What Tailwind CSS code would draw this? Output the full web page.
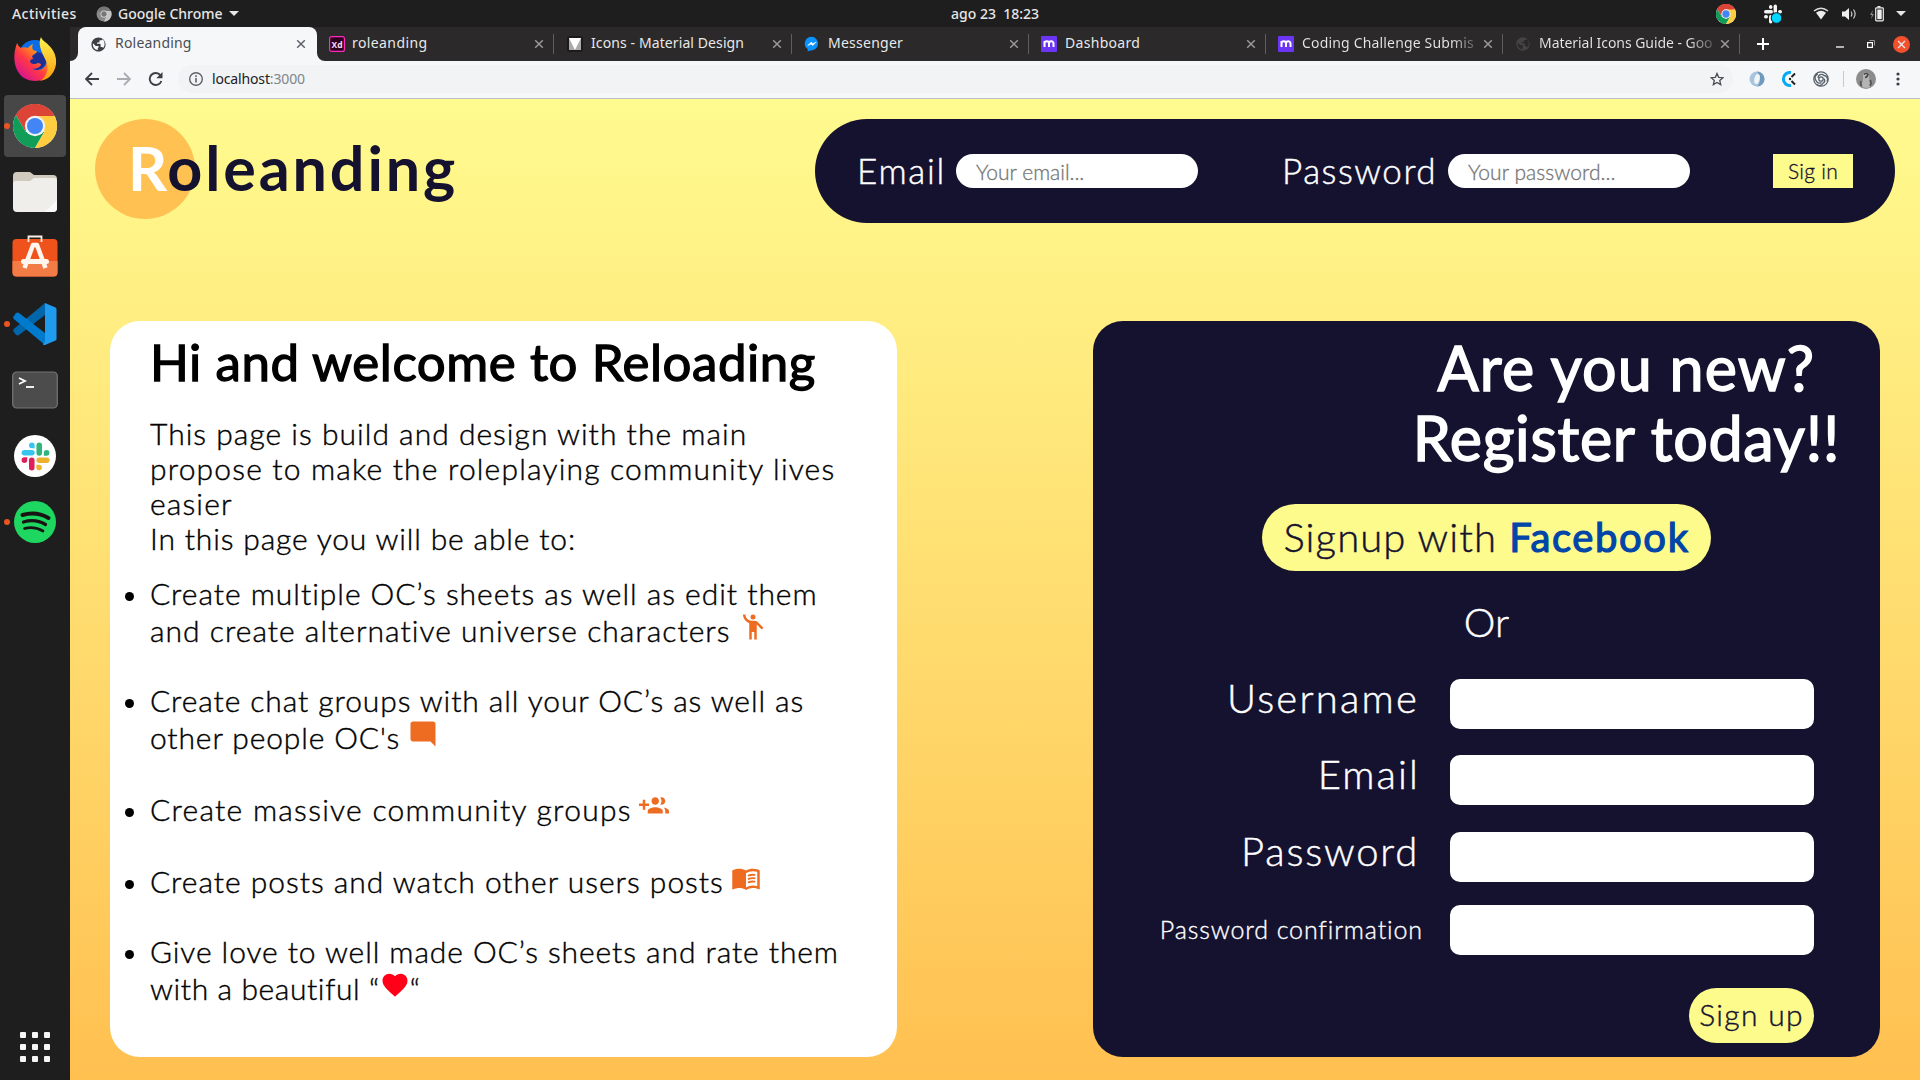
<!DOCTYPE html>
<html lang="en">
<head>
<meta charset="utf-8">
<title>Roleanding</title>
<script src="https://cdn.jsdelivr.net/npm/@tailwindcss/browser@4"></script>
</head>
<body class="w-[1920px] h-[1080px] overflow-hidden bg-[#1e1e1e] font-['Noto_Sans',sans-serif]">
<svg class="hidden">
  <defs>
    <symbol id="x" viewBox="0 0 10 10"><path d="M1.2 1.2l7.6 7.6M8.8 1.2L1.2 8.8" stroke="currentColor" stroke-width="1.5" fill="none"/></symbol>
    <symbol id="globe" viewBox="0 0 24 24"><path fill="currentColor" d="M12 2C6.48 2 2 6.48 2 12s4.48 10 10 10 10-4.480 10-10S17.520 2 12 2zm-1 17.900c-3.950-.49-7-3.850-7-7.900 0-.62.080-1.210.21-1.790L8 14h4v2l-1 1.500v2.400zm7.500-3c-.26-.81-1-1.400-1.900-1.400H15v-3c0-1-.6-1.500-1.500-1.500H10V9h2c.9 0 1.500-.6 1.500-1.300V6h2c1 0 1.700-.7 1.900-1.500C20 6 21 9 20.500 12.500c0 1.700-1 3.400-2 4.400z"/></symbol>
    <symbol id="chrome" viewBox="0 0 48 48">
      <circle cx="24" cy="24" r="22" fill="#fff"/>
      <path fill="#db4437" d="M24 24L4.950 13A22 22 0 0 1 43.050 13z"/>
      <path fill="#db4437" d="M24 2A22 22 0 0 0 4.950 13L14.500 29.500 24 14h19.600A22 22 0 0 0 24 2z"/>
      <path fill="#0f9d58" d="M4.950 13A22 22 0 0 0 24 46l9.500-16.500L24 34 14.500 29.500z"/>
      <path fill="#ffcd40" d="M43.600 14H24l9.500 15.500L24 46A22 22 0 0 0 43.600 14z"/>
      <circle cx="24" cy="24" r="10.200" fill="#f1f1f1"/><circle cx="24" cy="24" r="8" fill="#4285f4"/>
    </symbol>
    <symbol id="slack" viewBox="0 0 24 24">
      <g fill="#36c5f0"><path d="M9 0.500a2.300 2.300 0 1 0 0 4.600h2.300V2.800A2.300 2.300 0 0 0 9 0.500z"/><rect x="0.500" y="6.600" width="10.800" height="4.600" rx="2.300"/></g>
      <g fill="#2eb67d"><path d="M23.500 9a2.300 2.300 0 1 0-4.600 0v2.300h2.300A2.300 2.300 0 0 0 23.500 9z"/><rect x="12.800" y="0.500" width="4.600" height="10.800" rx="2.300"/></g>
      <g fill="#ecb22e"><path d="M15 23.500a2.300 2.300 0 1 0 0-4.600h-2.300v2.300a2.300 2.300 0 0 0 2.300 2.300z"/><rect x="12.800" y="12.800" width="10.800" height="4.600" rx="2.300"/></g>
      <g fill="#e01e5a"><path d="M0.500 15a2.300 2.300 0 1 0 4.600 0v-2.300H2.800A2.300 2.300 0 0 0 0.500 15z"/><rect x="6.600" y="12.800" width="4.600" height="10.800" rx="2.300"/></g>
    </symbol>
  </defs>
</svg>

<!-- desktop top bar -->
<header class="h-[27px] flex items-center justify-between pl-3 pr-[14px] text-[14px] leading-[27px] font-medium text-[#e6e6e6] bg-[#1e1e1e]">
  <div class="flex items-center w-[939px]">
    <span class="tracking-[.45px] w-[84px]">Activities</span>
    <svg class="size-4 mr-[6px]" viewBox="0 0 16 16"><circle cx="8" cy="8" r="7.500" fill="#8a8a8a"/><path d="M8 8L1.500 4.500A7.500 7.500 0 0 1 14.500 4.500z" fill="#777"/><path d="M8 5h7a7.500 7.500 0 0 1-7 10.500L11 9z" fill="#c4c4c4"/><circle cx="8" cy="8" r="3.500" fill="#ddd"/><circle cx="8" cy="8" r="2.700" fill="#777"/></svg>
    <span class="whitespace-nowrap">Google Chrome</span>
    <svg class="w-[10px] h-[5px] ml-[6px]" viewBox="0 0 10 5"><path d="M0 0h10L5 5z" fill="#e6e6e6"/></svg>
  </div>
  <span class="whitespace-pre w-[92px] -mt-px">ago 23  18:23</span>
  <div class="flex-1 flex items-center justify-end">
    <svg class="size-[22px]"><use href="#chrome"/></svg>
    <svg class="size-[22px] ml-[25px]" viewBox="0 0 22 22"><g fill="#f4f4f4"><rect x="2" y="7" width="9" height="3.400" rx="1.700"/><rect x="7" y="2" width="3.400" height="4" rx="1.700"/><rect x="11.600" y="1.500" width="3.400" height="9" rx="1.700"/><rect x="16" y="7" width="4" height="3.400" rx="1.700"/><rect x="2" y="12" width="4" height="3.400" rx="1.700"/><rect x="7" y="12" width="3.400" height="8.500" rx="1.700"/></g><circle cx="14.500" cy="15" r="5.300" fill="#00d5ff" stroke="#1e1e1e"/></svg>
    <svg class="w-[16px] h-[13px] ml-[29px]" viewBox="0 0 16 13"><path d="M1 4Q8-1.600 15 4" stroke="#ddd" stroke-width="1.600" fill="none"/><path d="M3 5.700Q8 2 13 5.700L8 12.500z" fill="#eee"/></svg>
    <svg class="w-[15px] h-[14px] ml-[13px]" viewBox="0 0 15 14"><path d="M0 4.500h3L7 1v12L3 9.500H0z" fill="#eee"/><path d="M9 4.500q1.800 2.500 0 5M11.500 2.500q3.200 4.500 0 9" stroke="#ccc" stroke-width="1.200" fill="none"/></svg>
    <svg class="w-[14px] h-[16px] ml-[13px]" viewBox="0 0 14 16"><path d="M3 4L0 9h2l-1 4 3-5H2z" fill="#888"/><path d="M7.500 0h3v1.500h-3z" fill="#eee"/><rect x="5.700" y="1.800" width="7.600" height="13" rx=".8" fill="none" stroke="#eee" stroke-width="1.200"/><rect x="7.300" y="3.500" width="4.400" height="9.700" fill="#eee"/></svg>
    <svg class="w-[10px] h-[5px] ml-[12px]" viewBox="0 0 10 5"><path d="M0 0h10L5 5z" fill="#e6e6e6"/></svg>
  </div>
</header>

<div class="flex h-[1053px]">
  <!-- dock -->
  <nav class="w-[70px] shrink-0 flex flex-col items-center pt-[2px] pb-[12px] gap-1">
    <div class="size-[62px] flex items-center justify-center">
      <svg class="size-[46px] -mt-[2px]" viewBox="0 0 46 46">
        <defs><linearGradient id="ff" x1="1" y1="0" x2="0.100" y2="0.900"><stop offset="0" stop-color="#fff44f"/><stop offset=".35" stop-color="#ff9a14"/><stop offset=".65" stop-color="#ff3647"/><stop offset="1" stop-color="#d3119b"/></linearGradient>
        <linearGradient id="fy" x1="0.500" y1="0" x2="0.500" y2="1"><stop offset="0" stop-color="#fff44f"/><stop offset="1" stop-color="#ff980e"/></linearGradient></defs>
        <circle cx="23" cy="21" r="17" fill="#0a6ce8"/><circle cx="25" cy="25" r="9" fill="#1d2f95"/>
        <path fill="url(#ff)" d="M5 7c1 2 2 4 4 5 2-1 5-1 7 0 1-2 3-3 5-4-1 2-1 4 0 6l3 1c1 0 1 1 0 2l-4 3 1 3c-2 0-3 1-3 3 2 3 6 2 8 1 2 0 3 1 3 2-2 3-6 4-9 4 6 3 15 0 15-9 0-5-2-8-4-11l11 4c4 10 1 28-19 28C5 45-2 26 5 7z"/>
        <path fill="url(#fy)" d="M29 1c1 4 7 6 11 12 5 7 6 17 0 25-3 4-7 6-12 7 8-5 9-14 6-20C31 18 25 9 29 1z"/>
      </svg>
    </div>
    <div class="size-[62px] flex items-center justify-center relative rounded bg-[#474747]">
      <i class="absolute left-0 size-[6px] rounded-full bg-[#e95420]"></i>
      <svg class="size-[48px]"><use href="#chrome"/></svg>
    </div>
    <div class="size-[62px] flex items-center justify-center">
      <svg class="w-[46px] h-[42px]" viewBox="0 0 46 42"><path d="M1 5a4 4 0 0 1 4-4h13l4 3h19a4 4 0 0 1 4 4v12H1z" fill="#cfcabd"/><path d="M1 13a3 3 0 0 1 3-3h14l4-3h20a3 3 0 0 1 3 3v27a4 4 0 0 1-4 4H5a4 4 0 0 1-4-4z" fill="#efeeea"/><path d="M45 29v8a4 4 0 0 1-4 4h-8z" fill="#fafaf8"/></svg>
    </div>
    <div class="size-[62px] flex items-center justify-center">
      <svg class="w-[46px] h-[42px] -mt-1" viewBox="0 0 46 42"><rect x=".5" y="4" width="45" height="37.500" rx="4" fill="#f0521b"/><path d="M.5 26h45v11.500a4 4 0 0 1-4 4h-37a4 4 0 0 1-4-4z" fill="#f37b46"/><path d="M16.500 7V1.500h13V7" fill="none" stroke="#fbeee6" stroke-width="1.800"/><path d="M12.500 33L21 10h4l8.500 23" fill="none" stroke="#fff6ee" stroke-width="4.500" stroke-linejoin="round"/><rect x="9" y="24" width="28" height="5" rx="2.500" fill="#fff6ee"/></svg>
    </div>
    <div class="size-[62px] flex items-center justify-center relative">
      <i class="absolute left-0 size-[6px] rounded-full bg-[#e95420]"></i>
      <svg class="w-[44px] h-[42px]" viewBox="0 0 44 42"><path d="M32 0v12L6 32q-1.500 1-3-.3L.8 29q-1.200-1.500 0-3z" fill="#0065a9"/><path d="M32 42V30L6 10q-1.500-1-3 .3L.8 13q-1.200 1.500 0 3z" fill="#007acc"/><path d="M32 0l10.500 4.500Q43.500 5 43.500 6v30q0 1-1 1.500L32 42q-1 .3-2-.6L32 38z" fill="#1f9cf0"/></svg>
    </div>
    <div class="size-[62px] flex items-center justify-center">
      <svg class="w-[46px] h-[38px]" viewBox="0 0 46 38"><rect x=".7" y="1" width="44.600" height="36" rx="4" fill="#4c4c4c" stroke="#757575" stroke-width="1.200"/><path d="M7 7l6 3-6 3" fill="none" stroke="#fff" stroke-width="1.800"/><path d="M14 16h8" stroke="#fff" stroke-width="1.800"/></svg>
    </div>
    <div class="size-[62px] flex items-center justify-center">
      <div class="size-[42px] rounded-full bg-white flex items-center justify-center"><svg class="size-[29px]"><use href="#slack"/></svg></div>
    </div>
    <div class="size-[62px] flex items-center justify-center relative">
      <i class="absolute left-0 size-[6px] rounded-full bg-[#e95420]"></i>
      <svg class="size-[42px]" viewBox="0 0 42 42"><circle cx="21" cy="21" r="21" fill="#1ed760"/><g fill="none" stroke="#191414" stroke-linecap="round"><path d="M8.500 14q14-4 26 3" stroke-width="4"/><path d="M9.500 21q12-3.500 22 2.500" stroke-width="3.300"/><path d="M10.500 27.500q10-2.500 18.500 2.500" stroke-width="2.700"/></g></svg>
    </div>
    <div class="mt-auto mb-[6px] grid grid-cols-3 gap-[6px]">
      <i class="size-[6px] rounded-[1px] bg-[#f5f5f5]"></i><i class="size-[6px] rounded-[1px] bg-[#f5f5f5]"></i><i class="size-[6px] rounded-[1px] bg-[#f5f5f5]"></i>
      <i class="size-[6px] rounded-[1px] bg-[#f5f5f5]"></i><i class="size-[6px] rounded-[1px] bg-[#f5f5f5]"></i><i class="size-[6px] rounded-[1px] bg-[#f5f5f5]"></i>
      <i class="size-[6px] rounded-[1px] bg-[#f5f5f5]"></i><i class="size-[6px] rounded-[1px] bg-[#f5f5f5]"></i><i class="size-[6px] rounded-[1px] bg-[#f5f5f5]"></i>
    </div>
  </nav>

  <!-- browser window -->
  <div class="w-[1850px] flex flex-col">
    <div class="h-[34px] bg-[#2b292a] flex items-center pl-2 text-[14px] leading-[20px] text-[#e8e8e8] whitespace-nowrap">
      <div class="relative w-[239px] h-full bg-[#f5f7f9] rounded-t-lg flex items-center pl-3 text-[#4a4d51]">
        <svg class="absolute -left-2 bottom-0 size-2" viewBox="0 0 8 8"><path d="M8 0v8H0a8 8 0 0 0 8-8z" fill="#f5f7f9"/></svg>
        <svg class="absolute -right-2 bottom-0 size-2" viewBox="0 0 8 8"><path d="M0 0v8h8a8 8 0 0 1-8-8z" fill="#f5f7f9"/></svg>
        <svg class="size-[17px] text-[#3c4043]"><use href="#globe"/></svg>
        <span class="ml-[8px] w-[181px] pb-[2px] tracking-[.2px]">Roleanding</span>
        <svg class="size-[10px] text-[#5f6368]"><use href="#x"/></svg>
      </div>
      <div class="w-[238px] h-full flex items-center pl-[12px]">
        <svg class="size-4" viewBox="0 0 16 16"><rect x=".6" y=".6" width="14.800" height="14.800" rx="2" fill="#2e001e" stroke="#ff2bc2" stroke-width="1.200"/><text x="2.500" y="11.500" font-size="9.500" font-weight="700" fill="#ffd9f2" textLength="11" lengthAdjust="spacingAndGlyphs">Xd</text></svg>
        <span class="ml-[7px] w-[182px] pb-[2px] tracking-[.4px]">roleanding</span>
        <svg class="size-[10px] text-[#9a9a9a]"><use href="#x"/></svg>
        <i class="ml-[9px] w-px h-5 bg-[#5f5d5e]"></i>
      </div>
      <div class="w-[237px] h-full flex items-center pl-[12px]">
        <svg class="size-4" viewBox="0 0 16 16"><rect width="16" height="16" rx="3" fill="#1b1b1b"/><rect x="2" y="2" width="12" height="12" fill="#aaa"/><path d="M2 2h12L8 14z" fill="#fff"/></svg>
        <span class="ml-[8px] w-[181px] pb-[2px] tracking-[.1px]">Icons - Material Design</span>
        <svg class="size-[10px] text-[#9a9a9a]"><use href="#x"/></svg>
        <i class="ml-[9px] w-px h-5 bg-[#5f5d5e]"></i>
      </div>
      <div class="w-[237px] h-full flex items-center pl-[12px]">
        <svg class="size-4" viewBox="0 0 16 16"><path d="M8 .8a7 6.800 0 0 0-4.300 12.300v2.500l2.300-1.200a7 6.800 0 1 0 2-13.600z" fill="#0a93ff"/><path d="M3.800 9.600l3.500-3.500 1.700 1.700L12.200 6 8.800 9.600 7 8z" fill="#fff" stroke="#fff" stroke-width=".6"/></svg>
        <span class="ml-[8px] w-[181px] pb-[2px] tracking-[.25px]">Messenger</span>
        <svg class="size-[10px] text-[#9a9a9a]"><use href="#x"/></svg>
        <i class="ml-[9px] w-px h-5 bg-[#5f5d5e]"></i>
      </div>
      <div class="w-[237px] h-full flex items-center pl-[12px]">
        <svg class="size-4" viewBox="0 0 16 16"><rect width="16" height="16" rx="1" fill="#6b35f5"/><path d="M3.500 11V5M3.500 7.500a2.200 2.200 0 0 1 4.500 0V11M8 7.500a2.200 2.200 0 0 1 4.500 0V11" fill="none" stroke="#fff" stroke-width="2"/></svg>
        <span class="ml-[8px] w-[181px] pb-[2px] tracking-[.3px]">Dashboard</span>
        <svg class="size-[10px] text-[#9a9a9a]"><use href="#x"/></svg>
        <i class="ml-[9px] w-px h-5 bg-[#5f5d5e]"></i>
      </div>
      <div class="w-[237px] h-full flex items-center pl-[12px]">
        <svg class="size-4" viewBox="0 0 16 16"><rect width="16" height="16" rx="1" fill="#6b35f5"/><path d="M3.500 11V5M3.500 7.500a2.200 2.200 0 0 1 4.500 0V11M8 7.500a2.200 2.200 0 0 1 4.500 0V11" fill="none" stroke="#fff" stroke-width="2"/></svg>
        <span class="ml-[8px] mr-[6px] w-[175px] pb-[2px] tracking-[.17px] overflow-hidden bg-gradient-to-r from-[#e8e8e8] from-85% to-[#2b292a] to-105% bg-clip-text text-transparent">Coding Challenge Submis</span>
        <svg class="size-[10px] text-[#9a9a9a]"><use href="#x"/></svg>
        <i class="ml-[9px] w-px h-5 bg-[#5f5d5e]"></i>
      </div>
      <div class="w-[237px] h-full flex items-center pl-[12px]">
        <svg class="size-4 text-[#444]"><use href="#globe"/></svg>
        <span class="ml-[8px] mr-[6px] w-[175px] pb-[2px] tracking-[-.05px] overflow-hidden bg-gradient-to-r from-[#e8e8e8] from-85% to-[#2b292a] to-105% bg-clip-text text-transparent">Material Icons Guide - Goo</span>
        <svg class="size-[10px] text-[#9a9a9a]"><use href="#x"/></svg>
        <i class="ml-[9px] w-px h-5 bg-[#5f5d5e]"></i>
      </div>
      <svg class="size-[12px] ml-[17px]" viewBox="0 0 12 12"><path d="M6 0v12M0 6h12" stroke="#fff" stroke-width="2"/></svg>
      <svg class="w-[8px] h-[2px] ml-[67px] mt-[5px]" viewBox="0 0 8 2"><path d="M0 1h8" stroke="#fff" stroke-width="1.300"/></svg>
      <svg class="size-[8px] ml-[23px]" viewBox="0 0 8 8"><path d="M.6 2.600h4.800v4.800H.6z" fill="none" stroke="#fff" stroke-width="1.200"/><path d="M2.500.5h5v5" fill="none" stroke="#999"/></svg>
      <div class="ml-[18px] size-[17px] rounded-full bg-[#f5502c] flex items-center justify-center"><svg class="size-[9px]"><use href="#x"/></svg></div>
    </div>

    <div class="h-[38px] bg-[#f5f7f9] border-b border-[#b9bdc9] flex items-center pl-[15px] pb-px text-[14px]">
      <svg class="size-[14px]" viewBox="0 0 14 14"><path d="M14 7H1.500M7 1L1 7l6 6" fill="none" stroke="#3c4043" stroke-width="1.800"/></svg>
      <svg class="size-[14px] ml-[18px]" viewBox="0 0 14 14"><path d="M0 7h12.500M7 1l6 6-6 6" fill="none" stroke="#a9acb0" stroke-width="1.800"/></svg>
      <svg class="size-[15px] ml-[17px] mr-px" viewBox="0 0 15 15"><path d="M12.500 3.300A6 6 0 1 0 13.400 9" fill="none" stroke="#3c4043" stroke-width="1.900"/><path d="M14.500 0v6.200H8.300z" fill="#3c4043"/></svg>
      <div class="ml-[14px] w-[1555px] h-7 rounded-full bg-[#f1f3f4] flex items-center pl-[11px] pr-[9px] leading-7">
        <svg class="size-[14px]" viewBox="0 0 14 14"><circle cx="7" cy="7" r="6.300" fill="none" stroke="#5f6368" stroke-width="1.400"/><path d="M7 6v4.500M7 3.300v1.600" stroke="#5f6368" stroke-width="1.600"/></svg>
        <span class="ml-[9px] flex-1 text-[#202124] tracking-[-.15px]">localhost<span class="text-[#80868b]">:3000</span></span>
        <svg class="size-[14px]" viewBox="0 0 24 24"><path d="M12 2.500l2.900 6.700 7.300.6-5.500 4.800 1.700 7.100L12 17.900l-6.300 3.800 1.700-7.100-5.500-4.800 7.300-.6z" fill="none" stroke="#4a4d51" stroke-width="2.200"/></svg>
      </div>
      <svg class="size-4 ml-[16px]" viewBox="0 0 16 16"><circle cx="8" cy="8" r="7.500" fill="#a9c4dd"/><path d="M8 .5a7.500 7.500 0 0 1 0 15c4-4 4-10 0-15z" fill="#6f99bf"/><ellipse cx="8" cy="8" rx="2.600" ry="5" transform="rotate(15 8 8)" fill="#f0f5fa"/></svg>
      <svg class="size-4 ml-[16px]" viewBox="0 0 16 16"><path d="M10 1.600A6.500 6.500 0 1 0 10 14.400" fill="none" stroke="#03a9f4" stroke-width="3"/><path d="M10.500 6l3.500-3.500M10.500 10l3.500 3.500" stroke="#222" stroke-width="2"/><circle cx="9" cy="8" r="1.200" fill="#222"/></svg>
      <svg class="size-4 ml-[16px]" viewBox="0 0 16 16"><g fill="none" stroke="#56616a" stroke-width="1.300"><circle cx="8" cy="8" r="7.200"/><circle cx="8" cy="8" r="2.200"/><path d="M5 7a3.500 3.500 0 0 1 6-2.500 4 4 0 0 1 3 6M11 7.500a3.500 3.500 0 0 1-1 4.800 4 4 0 0 1-6.500 1M8.500 11.500A3.500 3.500 0 0 1 3 9.500a4 4 0 0 1 2-6.500"/></g></svg>
      <i class="w-px h-4 ml-[14px] bg-[#c6c9cd]"></i>
      <svg class="size-5 ml-[12px]" viewBox="0 0 20 20"><circle cx="10" cy="10" r="10" fill="#8c8c8c"/><path d="M7 5q3-4 5.500 0l1 6 2 6q-5 4-10.500 0l2-6z" fill="#b4b4b4"/><path d="M8 5.500q2-2.500 4 0-1 3-3 3" fill="none" stroke="#444" stroke-width="1.500"/><path d="M5 12q-1 4 1 5M14 11q2 3 0 6" stroke="#555" fill="none" stroke-width="1.800"/></svg>
      <svg class="w-1 h-[14px] ml-[20px]" viewBox="0 0 4 14"><g fill="#3c4043"><circle cx="2" cy="2" r="1.600"/><circle cx="2" cy="7" r="1.600"/><circle cx="2" cy="12" r="1.600"/></g></svg>
    </div>

    <!-- page -->
    <main class="flex-1 bg-gradient-to-b from-[#fffb8f] to-[#ffc050] pt-5 font-[Lato,sans-serif] font-light">
      <div class="flex justify-between pl-[25px] pr-[25px] h-[104px]">
        <div class="flex">
          <div class="size-[100px] rounded-full bg-[#ffc252]"></div>
          <h1 class="-ml-[67px] mt-[19px] text-[61px] leading-[60px] font-bold text-[#15122f] tracking-[2.9px]"><span class="text-white tracking-[0px]">R</span>oleanding</h1>
        </div>
        <form class="w-[1080px] h-[104px] rounded-full bg-[#15122f] flex items-center pl-[42px] text-[35px] text-white">
          <label class="w-[99px] pb-[2px] tracking-[1.75px] [-webkit-text-stroke:.45px]">Email</label>
          <input class="w-[242px] h-[34px] rounded-[17px] bg-white px-[20px] text-[21px] tracking-[0] [-webkit-text-stroke:.3px] placeholder:text-[#757575]" placeholder="Your email...">
          <label class="ml-[84px] w-[166px] pb-[2px] tracking-[1.5px] [-webkit-text-stroke:.45px]">Password</label>
          <input class="w-[242px] h-[34px] rounded-[17px] bg-white px-[20px] text-[21px] tracking-[.05px] [-webkit-text-stroke:.3px] placeholder:text-[#757575]" placeholder="Your password...">
          <button type="button" class="ml-[83px] w-[80px] h-[34px] bg-[#fdfb8c] text-[#15122f] text-[21px] leading-[34px] tracking-[.3px] [-webkit-text-stroke:.3px]">Sig in</button>
        </form>
      </div>

      <div class="mt-[98px] pl-[40px] pr-[40px] flex justify-between">
        <section class="w-[787px] h-[736px] rounded-[30px] bg-white pl-[40px] pt-[11px] text-[30px] text-black whitespace-nowrap [-webkit-text-stroke:.4px]">
          <h2 class="text-[51px] leading-[60px] font-normal tracking-[.55px] [-webkit-text-stroke:1.3px]">Hi and welcome to Reloading</h2>
          <p class="mt-6 leading-[35px]"><span class="tracking-[1.02px]">This page is build and design with the main</span><br><span class="tracking-[1.18px]">propose to make the roleplaying community lives</span><br><span class="tracking-[1.15px]">easier</span><br><span class="tracking-[.84px]">In this page you will be able to:</span></p>
          <ul class="mt-[19px] leading-[37px]">
            <li class="flex"><i class="size-[9px] rounded-full bg-black -ml-[25px] mr-[16px] mt-[17px]"></i><div><span class="tracking-[.97px]">Create multiple OC’s sheets as well as edit them</span><br><span class="tracking-[1.02px]">and create alternative universe characters</span><svg class="inline-block align-baseline size-[30px] ml-[7px] text-[#ee6c21]" viewBox="0 0 24 24" fill="currentColor"><circle cx="12" cy="4" r="2"/><path d="M15.890 8.110C15.500 7.720 14.830 7 13.530 7h-2.540C8.240 6.990 6 4.750 6 2H4c0 3.160 2.110 5.840 5 6.710V22h2v-6h2v6h2V10.050L18.950 14l1.410-1.410-4.470-4.480z"/></svg></div></li>
            <li class="flex mt-[33px]"><i class="size-[9px] rounded-full bg-black -ml-[25px] mr-[16px] mt-[17px]"></i><div><span class="tracking-[.91px]">Create chat groups with all your OC’s as well as</span><br><span class="tracking-[.87px]">other people OC's</span><svg class="inline-block align-baseline size-[30px] ml-[8px] text-[#ee6c21]" viewBox="0 0 24 24" fill="currentColor"><path d="M21.990 4c0-1.100-.89-2-1.990-2H4c-1.100 0-2 .9-2 2v12c0 1.100.9 2 2 2h14l4 4-.01-18z"/></svg></div></li>
            <li class="flex mt-[35px]"><i class="size-[9px] rounded-full bg-black -ml-[25px] mr-[16px] mt-[17px]"></i><div><span class="tracking-[1.28px]">Create massive community groups</span><svg class="inline-block align-baseline size-[30px] ml-[7px] text-[#ee6c21]" viewBox="0 0 24 24" fill="currentColor"><path d="M8 10H5V7H3v3H0v2h3v3h2v-3h3v-2zm10 1c1.660 0 2.990-1.340 2.990-3S19.660 5 18 5c-.32 0-.63.050-.91.140.57.81.9 1.790.9 2.860s-.34 2.040-.9 2.860c.28.090.59.140.91.140zm-5 0c1.660 0 2.990-1.340 2.990-3S14.660 5 13 5s-3 1.340-3 3 1.340 3 3 3zm6.620 2.160c.83.73 1.380 1.660 1.380 2.840v2h3v-2c0-1.540-2.370-2.490-4.380-2.840zM13 13c-2 0-6 1-6 3v2h12v-2c0-2-4-3-6-3z"/></svg></div></li>
            <li class="flex mt-[35px]"><i class="size-[9px] rounded-full bg-black -ml-[25px] mr-[16px] mt-[17px]"></i><div><span class="tracking-[.98px]">Create posts and watch other users posts</span><svg class="inline-block align-baseline size-[30px] ml-[7px] text-[#ee6c21]" viewBox="0 0 24 24" fill="currentColor"><path d="M21 5c-1.110-.35-2.330-.5-3.500-.5-1.950 0-4.050.4-5.500 1.500-1.450-1.100-3.550-1.500-5.500-1.500S2.450 4.900 1 6v14.650c0 .25.25.5.5.5.1 0 .15-.05.25-.05C3.100 20.450 5.050 20 6.500 20c1.950 0 4.050.4 5.500 1.500 1.350-.85 3.800-1.500 5.500-1.500 1.650 0 3.350.3 4.750 1.050.1.050.15.050.25.050.25 0 .5-.25.5-.5V6c-.6-.45-1.250-.75-2-1zm0 13.500c-1.100-.35-2.300-.5-3.500-.5-1.700 0-4.150.65-5.500 1.500V8c1.350-.85 3.800-1.500 5.500-1.500 1.200 0 2.400.15 3.500.5v11.500z"/><path d="M13.500 10.200q3-1.200 6-.6M13.500 12.900q3-1.200 6-.6M13.500 15.600q3-1.200 6-.6" fill="none" stroke="currentColor" stroke-width="1.400"/></svg></div></li>
            <li class="flex mt-[33px]"><i class="size-[9px] rounded-full bg-black -ml-[25px] mr-[16px] mt-[17px]"></i><div><span class="tracking-[.92px]">Give love to well made OC’s sheets and rate them</span><br><span class="tracking-[.6px]">with a beautiful “</span><svg class="inline-block align-baseline size-[30px] text-[#ff0018]" viewBox="0 0 24 24" fill="currentColor"><path d="M12 21.350l-1.450-1.320C5.400 15.360 2 12.280 2 8.500 2 5.420 4.420 3 7.500 3c1.740 0 3.410.81 4.500 2.090C13.090 3.810 14.760 3 16.500 3 19.580 3 22 5.420 22 8.500c0 3.780-3.400 6.860-8.550 11.540L12 21.350z"/></svg>“</div></li>
          </ul>
        </section>

        <section class="w-[787px] h-[736px] rounded-[30px] bg-[#15122f] pt-[12px] text-white text-[40px] whitespace-nowrap flex flex-col [-webkit-text-stroke:.45px]">
          <h2 class="self-end mr-[40px] text-[61px] leading-[70px] font-normal text-center [-webkit-text-stroke:1.5px]"><span class="tracking-[1.1px]">Are you new?</span><br><span class="tracking-[.7px]">Register today!!</span></h2>
          <button type="button" class="self-center mt-[31px] w-[449px] h-[67px] pb-px rounded-full bg-[#fdfb8c] text-[#15122f] leading-[66px]"><span class="tracking-[1.1px]">Signup with </span><span class="font-normal tracking-[1.6px] text-[#0045a8] [-webkit-text-stroke:1.2px]">Facebook</span></button>
          <p class="self-center mt-[27px] leading-[48px]">Or</p>
          <form class="mt-[33px] w-[721px] flex flex-col">
            <div class="flex justify-end h-[50px]"><label class="leading-[39px] mr-[31px] tracking-[2.2px]">Username</label><input class="w-[364px] rounded-[10px] bg-white"></div>
            <div class="flex justify-end h-[50px] mt-[26px]"><label class="leading-[39px] mr-[30px] tracking-[2.1px]">Email</label><input class="w-[364px] rounded-[10px] bg-white"></div>
            <div class="flex justify-end h-[50px] mt-[27px]"><label class="leading-[39px] mr-[31px] tracking-[1.8px]">Password</label><input class="w-[364px] rounded-[10px] bg-white"></div>
            <div class="flex justify-end h-[50px] mt-[23px]"><label class="text-[25px] leading-[49px] mr-[27px] tracking-[.87px] [-webkit-text-stroke:.35px]">Password confirmation</label><input class="w-[364px] rounded-[10px] bg-white"></div>
            <button type="button" class="self-end mt-[33px] w-[125px] h-[55px] pb-[2px] rounded-full bg-[#fdfb8c] text-[#15122f] text-[30px] leading-[53px] tracking-[1.3px] [-webkit-text-stroke:.4px]">Sign up</button>
          </form>
        </section>
      </div>
    </main>
  </div>
</div>
</body>
</html>
